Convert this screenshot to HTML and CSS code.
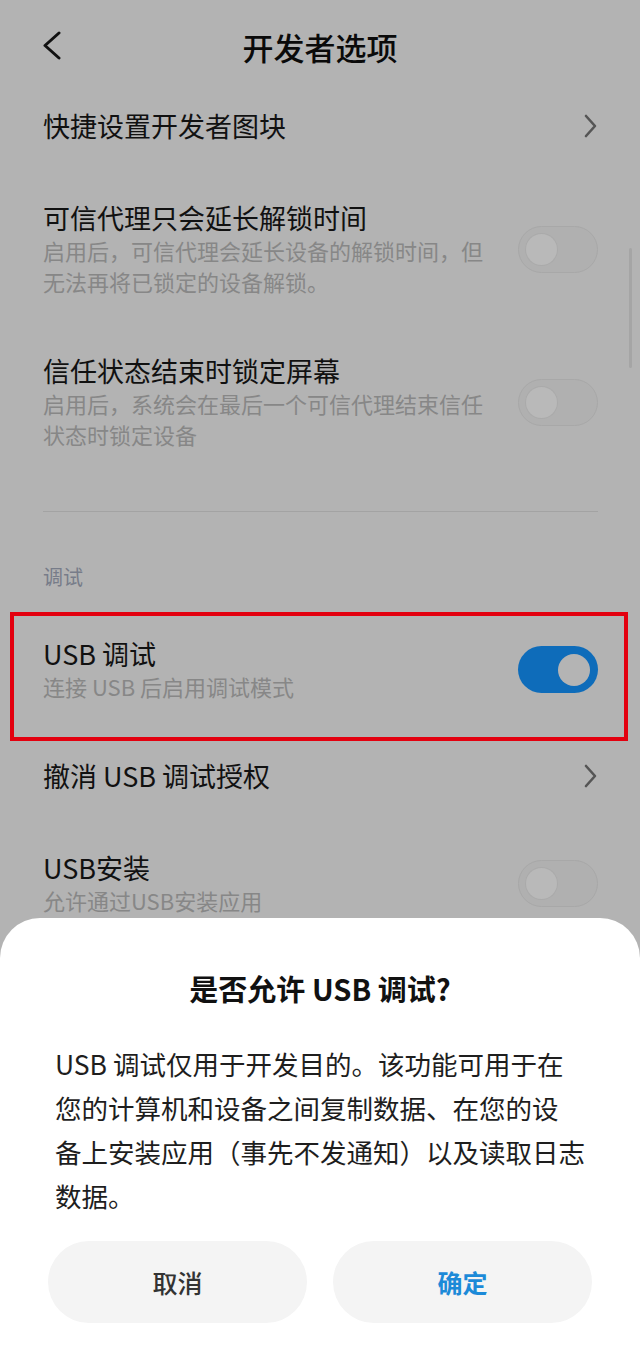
FILE: index.html
```html
<!DOCTYPE html>
<html lang="zh-CN">
<head>
<meta charset="utf-8">
<title>开发者选项</title>
<link rel="stylesheet" href="styles.css">
</head>
<body>
<div class="screen">
  <header class="topbar">
    <div class="back-wrap">
      <svg class="back" width="24" height="34" viewBox="0 0 24 34"><polyline points="16,2 2,14.5 16,27" fill="none" stroke="#111" stroke-width="3" stroke-linecap="round" stroke-linejoin="round"/></svg>
    </div>
    <h1 class="page-title">开发者选项</h1>
    <div></div>
  </header>

  <div class="item nav row1">
    <span class="title">快捷设置开发者图块</span>
    <svg class="chev" width="14" height="24" viewBox="0 0 14 24"><polyline points="2,2 11,12 2,22" fill="none" stroke="#555" stroke-width="2.6" stroke-linecap="round" stroke-linejoin="round"/></svg>
  </div>

  <div class="item sw row2">
    <div class="text">
      <div class="title">可信代理只会延长解锁时间</div>
      <div class="sub">启用后，可信代理会延长设备的解锁时间，但<br>无法再将已锁定的设备解锁。</div>
    </div>
    <span class="switch off"><span class="knob"></span></span>
  </div>

  <div class="item sw row3">
    <div class="text">
      <div class="title">信任状态结束时锁定屏幕</div>
      <div class="sub">启用后，系统会在最后一个可信代理结束信任<br>状态时锁定设备</div>
    </div>
    <span class="switch off"><span class="knob"></span></span>
  </div>

  <div class="divider"></div>
  <div class="section">调试</div>

  <div class="highlight">
    <div class="item sw inbox">
      <div class="text">
        <div class="title">USB 调试</div>
        <div class="sub">连接 USB 后启用调试模式</div>
      </div>
      <span class="switch on"><span class="knob"></span></span>
    </div>
  </div>

  <div class="item nav row-revoke">
    <span class="title">撤消 USB 调试授权</span>
    <svg class="chev" width="14" height="24" viewBox="0 0 14 24"><polyline points="2,2 11,12 2,22" fill="none" stroke="#555" stroke-width="2.6" stroke-linecap="round" stroke-linejoin="round"/></svg>
  </div>

  <div class="item sw row-install">
    <div class="text">
      <div class="title">USB安装</div>
      <div class="sub">允许通过USB安装应用</div>
    </div>
    <span class="switch off"><span class="knob"></span></span>
  </div>

  <div class="scrollbar"></div>

  <div class="sheet">
    <div class="sheet-title">是否允许 USB 调试?</div>
    <div class="sheet-body">USB 调试仅用于开发目的。该功能可用于在<br>您的计算机和设备之间复制数据、在您的设<br>备上安装应用（事先不发通知）以及读取日志<br>数据。</div>
    <div class="buttons">
      <div class="btn cancel">取消</div>
      <div class="btn ok">确定</div>
    </div>
  </div>
</div>
</body>
</html>
```

FILE: styles.css
```css
html, body {
  margin: 0;
  padding: 0;
}
body {
  font-family: "Noto Sans CJK SC", "Noto Sans", "Liberation Sans", sans-serif;
  background: #b3b3b3;
}
.screen {
  position: relative;
  width: 640px;
  height: 1365px;
  overflow: hidden;
  background: #b3b3b3;
}
.topbar {
  height: 94px;
  display: grid;
  grid-template-columns: 1fr auto 1fr;
  align-items: center;
}
.back-wrap {
  padding-left: 43px;
  display: flex;
  align-items: center;
  padding-top: 2px;
}
.page-title {
  margin: 0;
  font-size: 31px;
  font-weight: 500;
  color: #0a0a0a;
  line-height: 40px;
}
.item {
  display: flex;
  align-items: center;
  justify-content: space-between;
  padding: 0 42px 0 43px;
}
.title {
  font-size: 27px;
  line-height: 34px;
  color: #111;
  white-space: nowrap;
}
.sub {
  font-size: 22px;
  line-height: 31px;
  color: #878787;
  white-space: nowrap;
}
.row1 {
  height: 64px;
}
.row2 {
  padding-top: 43px;
  padding-bottom: 28px;
}
.row3 {
  padding-top: 29px;
  padding-bottom: 26px;
}
.switch {
  position: relative;
  width: 80px;
  height: 47px;
  border-radius: 24px;
  box-sizing: border-box;
  flex: none;
}
.switch.off {
  background: #b0b0b0;
  border: 1px solid #a8a8a8;
}
.switch.off .knob {
  position: absolute;
  left: 7px;
  top: 7px;
  width: 31px;
  height: 31px;
  border-radius: 50%;
  background: #b9b9b9;
  box-shadow: 0 0 0 1px #aaaaaa;
}
.switch.on {
  background: #0e6cba;
}
.switch.on .knob {
  position: absolute;
  right: 8px;
  top: 7.5px;
  width: 32px;
  height: 32px;
  border-radius: 50%;
  background: #b4b4b4;
}
.divider {
  margin: 35px 42px 0 43px;
  height: 1px;
  background: #a3a3a3;
}
.section {
  margin-top: 52px;
  padding-left: 43px;
  font-size: 20px;
  line-height: 26px;
  color: #777c89;
}
.highlight {
  margin: 22px 12px 0 10px;
  border: 4px solid #e3000f;
  height: 121px;
  box-sizing: content-box;
}
.item.inbox {
  padding: 21px 26px 0 29px;
}
.row-revoke {
  height: 70px;
}
.row-install {
  padding-top: 40px;
}
.scrollbar {
  position: absolute;
  left: 629px;
  top: 248px;
  width: 3px;
  height: 120px;
  border-radius: 2px;
  background: #a5a5a5;
}
.sheet {
  position: absolute;
  left: 0;
  right: 0;
  bottom: 0;
  height: 447px;
  background: #ffffff;
  border-radius: 40px 40px 0 0;
}
.sheet-title {
  margin-top: 50px;
  text-align: center;
  font-size: 29px;
  line-height: 40px;
  font-weight: 700;
  color: #111;
  white-space: nowrap;
}
.sheet-body {
  margin-top: 34px;
  padding: 0 40px 0 55px;
  font-size: 26.5px;
  line-height: 44px;
  color: #1e1e1e;
  white-space: nowrap;
}
.buttons {
  margin-top: 23px;
  padding: 0 48px;
  display: flex;
  gap: 26px;
}
.btn {
  flex: 1;
  height: 82px;
  border-radius: 41px;
  background: #f4f4f4;
  display: flex;
  align-items: center;
  justify-content: center;
  font-size: 25px;
}
.btn.cancel {
  color: #333;
  font-weight: 500;
}
.btn.ok {
  color: #1c8ad8;
  font-weight: 700;
}
```
